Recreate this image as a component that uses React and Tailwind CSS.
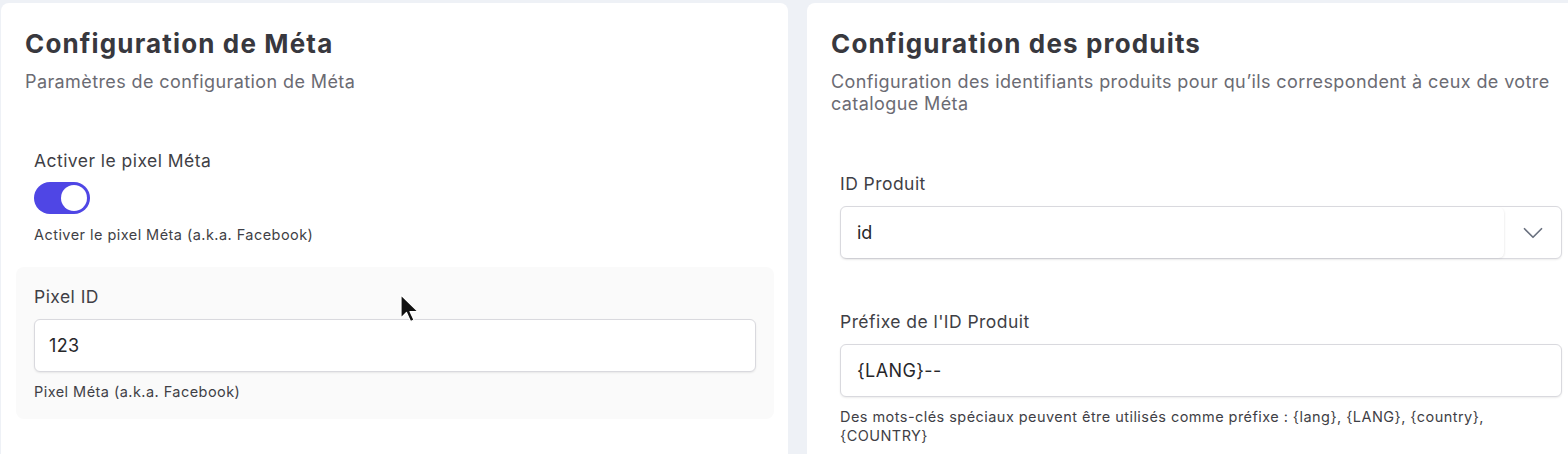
import { ChevronDown } from 'lucide-react'

function Field({ label, help, helpClass = '', children, className = '' }) {
  return (
    <div className={className}>
      <label className="block text-[17.5px] leading-6 tracking-[0.45px] text-[#3f3f46]">{label}</label>
      <div className="mt-[10px]">{children}</div>
      {help && <p className={`mt-[10px] text-[14.5px] leading-[19px] tracking-[0.45px] text-[#3f3f46] ${helpClass}`}>{help}</p>}
    </div>
  )
}

function TextInput({ value, pad = 'pl-[14px]' }) {
  return (
    <div className={`h-[53px] flex items-center ${pad} rounded-md border border-[#d9d9de] bg-white shadow-[0_1px_2px_rgba(0,0,0,0.08)] text-[18px] tracking-[0.4px] text-[#27272a]`}>
      {value}
    </div>
  )
}

function Header({ title, subtitle }) {
  return (
    <div className="px-[9px]">
      <h2 className="text-[26px] leading-8 font-bold text-[#38383e] tracking-[1.15px]">{title}</h2>
      <p className="mt-[11px] text-[18px] leading-[22px] tracking-[0.4px] text-[#6b6b73]">{subtitle}</p>
    </div>
  )
}

export default function App() {
  return (
    <div className="relative w-full h-screen overflow-hidden bg-[#eef1f6]" style={{ fontFamily: 'Inter, "Noto Sans", sans-serif' }}>
      <div className="flex gap-[19px] w-[1594px] pl-[1px] pt-[3px]">
        {/* Meta */}
        <section className="w-[787px] h-[470px] shrink-0 bg-white rounded-lg pl-[15px] pr-[14px] pt-[25px]">
          <Header title="Configuration de Méta" subtitle="Paramètres de configuration de Méta" />

          <div className="mt-[56px] px-[18px]">
            <div className="text-[17.5px] leading-6 tracking-[0.45px] text-[#3f3f46]">Activer le pixel Méta</div>
            <div className="mt-[9px] w-[56px] h-[32px] rounded-full bg-[#4f46e5] relative">
              <span className="absolute top-[3px] left-[27px] w-[26px] h-[26px] rounded-full bg-white" />
            </div>
            <p className="mt-[11px] text-[14.5px] leading-5 tracking-[0.45px] text-[#3f3f46]">Activer le pixel Méta (a.k.a. Facebook)</p>
          </div>

          <div className="mt-[22px] rounded-lg bg-[#fafafa] px-[18px] pt-[18px] pb-[18px]">
            <Field label="Pixel ID" help="Pixel Méta (a.k.a. Facebook)">
              <TextInput value="123" />
            </Field>
          </div>
        </section>

        {/* Produits */}
        <section className="w-[787px] h-[470px] shrink-0 bg-white rounded-lg pl-[15px] pr-[14px] pt-[25px]">
          <Header
            title="Configuration des produits"
            subtitle="Configuration des identifiants produits pour qu’ils correspondent à ceux de votre catalogue Méta"
          />

          <div className="mt-[57px] px-[18px]">
            <Field label="ID Produit">
              <div className="h-[53px] flex rounded-md border border-[#d9d9de] bg-white shadow-[0_1px_2px_rgba(0,0,0,0.08)]">
                <div className="flex-1 flex items-center pl-[16px] rounded-md shadow-[1px_1px_2px_rgba(0,0,0,0.06)] text-[18px] text-[#27272a]">id</div>
                <div className="w-[57px] flex items-center justify-center text-[#6b7280]">
                  <ChevronDown size={34} strokeWidth={1.2} />
                </div>
              </div>
            </Field>

            <Field
              className="mt-[51px]"
              label="Préfixe de l'ID Produit"
              help="Des mots-clés spéciaux peuvent être utilisés comme préfixe : {lang}, {LANG}, {country}, {COUNTRY}"
              helpClass="max-w-[690px]"
            >
              <TextInput value="{LANG}--" pad="pl-[16px]" />
            </Field>
          </div>
        </section>
      </div>

      {/* mouse pointer */}
      <svg className="absolute left-[400px] top-[294px]" width="22" height="32" viewBox="0 0 22 32">
        <path d="M1 1 L1 24 L6.5 18.5 L10.5 27.5 L14 26 L10 17.5 L18 17.5 Z" fill="#111" stroke="#fff" strokeWidth="1.2" strokeLinejoin="round" />
      </svg>
    </div>
  )
}
